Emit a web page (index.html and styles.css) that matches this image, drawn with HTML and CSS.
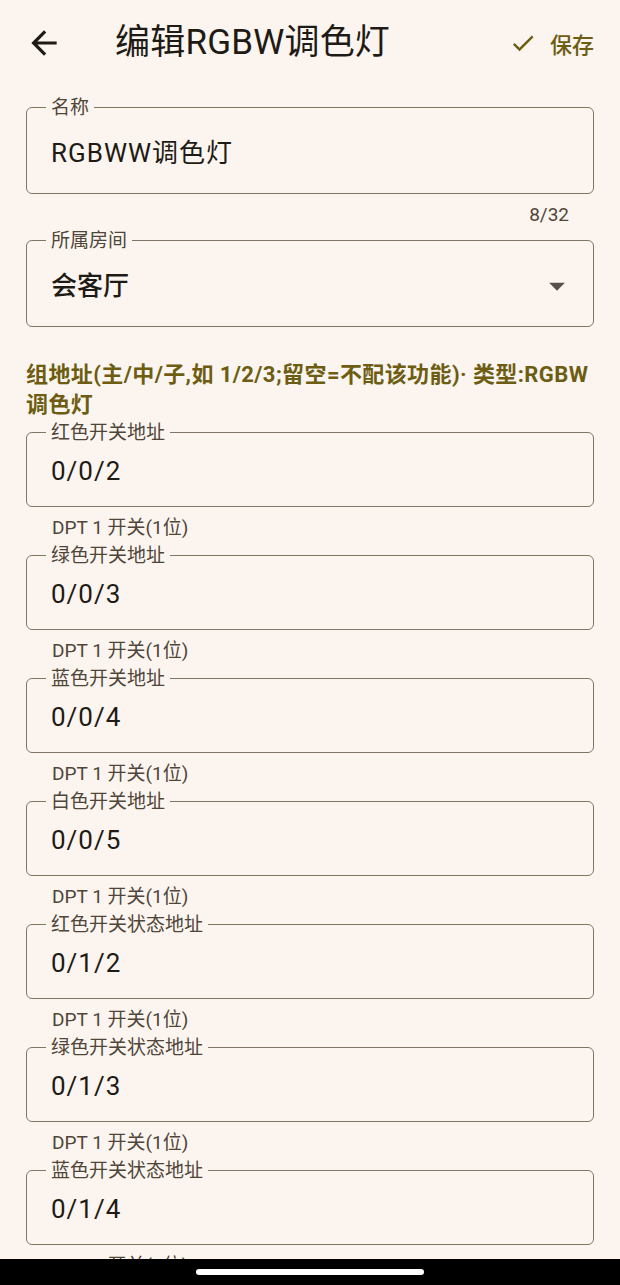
FILE: index.html
```html
<!DOCTYPE html>
<html lang="zh-CN">

<head>
    <meta charset="UTF-8">
    <title>编辑RGBW调色灯</title>
    <link rel="stylesheet" href="styles.css">
</head>

<body>
    <div class="topbar">
        <button class="icon-btn back">
            <svg width="38" height="38" viewBox="0 0 24 24"><path d="M20 11H7.83l5.59-5.59L12 4l-8 8 8 8 1.41-1.41L7.83 13H20v-2z" fill="#1e1b16"/></svg>
        </button>
        <div class="title">编辑RGBW调色灯</div>
        <button class="save">
            <svg width="28" height="28" viewBox="0 0 24 24"><path d="M9 16.17L4.83 12l-1.42 1.41L9 19 21 7l-1.41-1.41z" fill="#6c5d13"/></svg>
            <span>保存</span>
        </button>
    </div>

    <div class="page">
        <fieldset class="field big">
            <legend>名称</legend>
            <div class="value">RGBWW调色灯</div>
        </fieldset>
        <div class="counter">8/32</div>

        <fieldset class="field big select">
            <legend>所属房间</legend>
            <div class="value">
                <span>会客厅</span>
                <svg width="38" height="38" viewBox="0 0 24 24"><path d="M7 10l5 5 5-5z" fill="#55504a"/></svg>
            </div>
        </fieldset>

        <div class="section">组地址(主/中/子,如 1/2/3;留空=不配该功能)· 类型:RGBW调色灯</div>

        <fieldset class="field">
            <legend>红色开关地址</legend>
            <div class="value">0/0/2</div>
        </fieldset>
        <div class="helper">DPT 1 开关(1位)</div>

        <fieldset class="field">
            <legend>绿色开关地址</legend>
            <div class="value">0/0/3</div>
        </fieldset>
        <div class="helper">DPT 1 开关(1位)</div>

        <fieldset class="field">
            <legend>蓝色开关地址</legend>
            <div class="value">0/0/4</div>
        </fieldset>
        <div class="helper">DPT 1 开关(1位)</div>

        <fieldset class="field">
            <legend>白色开关地址</legend>
            <div class="value">0/0/5</div>
        </fieldset>
        <div class="helper">DPT 1 开关(1位)</div>

        <fieldset class="field">
            <legend>红色开关状态地址</legend>
            <div class="value">0/1/2</div>
        </fieldset>
        <div class="helper">DPT 1 开关(1位)</div>

        <fieldset class="field">
            <legend>绿色开关状态地址</legend>
            <div class="value">0/1/3</div>
        </fieldset>
        <div class="helper">DPT 1 开关(1位)</div>

        <fieldset class="field">
            <legend>蓝色开关状态地址</legend>
            <div class="value">0/1/4</div>
        </fieldset>
        <div class="helper">DPT 1 开关(1位)</div>
    </div>

    <div class="navbar">
        <div class="pill"></div>
    </div>
</body>

</html>
```

FILE: styles.css
```css
html,
body {
    height: 1285px;
    overflow: hidden;
}
body {
    margin: 0;
    background: #fcf5ef;
    color: #1e1b16;
    font-family: Roboto, "Noto Sans CJK SC", sans-serif;
}

button {
    border: none;
    background: none;
    padding: 0;
    font-family: inherit;
    cursor: pointer;
}

.topbar {
    height: 86px;
    display: flex;
    align-items: center;
    padding: 0 26px 0 25px;
}
.icon-btn {
    width: 38px;
    height: 38px;
    display: flex;
}
.title {
    margin-left: 52px;
    font-size: 35px;
    line-height: 40px;
    letter-spacing: 0.2px;
    flex: 1;
}
.save {
    display: flex;
    align-items: center;
    gap: 13px;
    color: #6c5d13;
    font-size: 22px;
    font-weight: 500;
}

.page {
    padding: 12px 26px 0;
}

.field {
    margin: 0;
    padding: 0 24px;
    border: 1.5px solid #817567;
    border-radius: 6px;
    min-width: 0;
}
.field legend {
    margin-left: -5px;
    padding: 0 5px;
    font-size: 19px;
    line-height: 19px;
    color: #4f4539;
}
.field .value {
    font-size: 26px;
    line-height: 32px;
    letter-spacing: 1px;
    padding: 12.5px 0 19.5px;
}
.field.big .value {
    padding: 19.5px 0 24.5px;
}
.select {
    padding-right: 17px;
}
.select .value {
    display: flex;
    align-items: center;
    justify-content: space-between;
    font-weight: 500;
    letter-spacing: 0;
    height: 32px;
}

.counter {
    text-align: right;
    padding-right: 25px;
    font-size: 19px;
    line-height: 26px;
    color: #4f4539;
    margin: 8px 0 3px;
}

.section {
    margin: 33px 0 3px;
    font-size: 22px;
    line-height: 30px;
    letter-spacing: 0.4px;
    font-weight: 700;
    color: #6c5d13;
}

.helper {
    padding-left: 26px;
    font-size: 19px;
    line-height: 26px;
    color: #4f4539;
    margin: 8px 0 5px;
}

.navbar {
    position: fixed;
    left: 0;
    right: 0;
    bottom: 0;
    height: 26px;
    background: #000;
    display: flex;
    justify-content: center;
    align-items: center;
}
.pill {
    width: 228px;
    height: 6px;
    border-radius: 3px;
    background: #fff;
}
```
